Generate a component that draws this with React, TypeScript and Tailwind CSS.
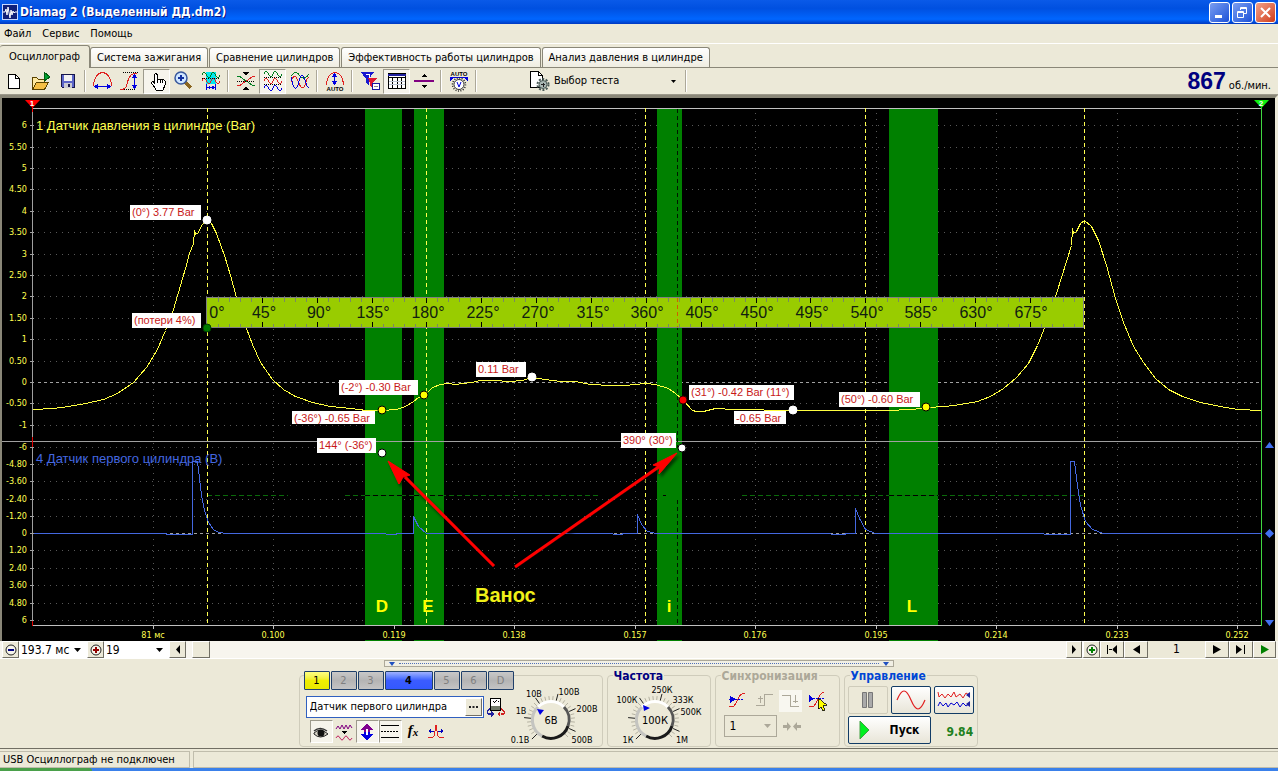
import React from "react";

/* ---------- shared icon canvas ---------- */
function Ico({ children, w = 26, h = 24 }: { children: React.ReactNode; w?: number; h?: number }) {
  return (
    <svg width={w} height={h} viewBox={`0 0 ${w} ${h}`} fill="none" shapeRendering="crispEdges" aria-hidden="true" className="shrink-0">
      {children}
    </svg>
  );
}

const RED = "#e02020";
const BLUE = "#0000e0";

function ToolButton({ label, active, children }: { label: string; active?: boolean; children: React.ReactNode }) {
  return (
    <button
      type="button"
      aria-label={label}
      aria-pressed={active}
      className={
        active
          ? "flex h-[25px] w-[27px] items-center justify-center border border-t-[#9d9a8c] border-l-[#9d9a8c] border-r-white border-b-white bg-[#f6f4ec]"
          : "flex h-[25px] w-[27px] items-center justify-center"
      }
    >
      {children}
    </button>
  );
}

function Sep() {
  return <div className="mx-[3px] h-[22px] w-[2px] border-l border-r border-l-[#aca899] border-r-white" />;
}

const wave = (y: number, a: number) => `M4 ${y}q2.250 ${-a} 4.500 0t4.500 0t4.500 0t4.500 0`;

function Toolbar() {
  return (
    <div className="flex h-[27px] items-center border-b border-[#9d9a8c] bg-[#ece9d8]">
      <ToolButton label="Новый"><Ico><path d="M7.500 5.500h7l4 4v10h-11z" fill="#fff" stroke="#000" /><path d="M14.500 5.500v4h4" stroke="#000" /></Ico></ToolButton>
      <ToolButton label="Открыть">
        <Ico>
          <path d="M4.500 20.500v-12h4l2 2h6v4" fill="#ffe9a0" stroke="#5a4300" />
          <path d="M4.500 20.500l4-7h12l-4 7z" fill="#f5bf45" stroke="#5a4300" />
          <path d="M16 3v9l6-4z" fill="#00a030" stroke="#005a10" />
        </Ico>
      </ToolButton>
      <ToolButton label="Сохранить">
        <Ico>
          <path d="M6.500 5.500h13v13h-12l-1-1z" fill="#5b64c8" stroke="#16164a" />
          <rect x="9" y="6" width="8" height="6" fill="#f2f2f2" />
          <rect x="9" y="14" width="8" height="5" fill="#c9c9d2" />
          <rect x="13" y="15" width="2" height="3" fill="#16164a" />
        </Ico>
      </ToolButton>
      <Sep />
      <ToolButton label="Период">
        <Ico>
          <path d="M3.500 17C4 7 9 3.500 12.500 3.500S21 7 21.500 17" stroke={RED} />
          <path d="M5 17.500h15" stroke={BLUE} strokeWidth="1" />
          <path d="M4 17.500l4-3v6zM21 17.500l-4-3v6z" fill={BLUE} />
        </Ico>
      </ToolButton>
      <ToolButton label="Фронт">
        <Ico>
          <path d="M6 3.500h15M3 20.500h15" stroke="#000" strokeDasharray="1 1" />
          <path d="M3 20.500c8 0 6-5 8-9s2-7 9-7" stroke={RED} />
          <path d="M17.500 6v13" stroke={BLUE} />
          <path d="M17.500 5l-3 4h6zM17.500 20l-3-4h6z" fill={BLUE} />
        </Ico>
      </ToolButton>
      <ToolButton label="Рука" active>
        <Ico>
          <path d="M10.500 14.500V5.500q1-2 2.500 0v5q1.500-1 2.500 0q2-1 3 .5q2-.5 2.500 1v4l-2 5h-7c-1-3-3-4-4.500-7q0-2 2-1z" fill="#fff" stroke="#000" />
          <path d="M13.500 10v4M16 11v3M18.500 12v2" stroke="#000" />
        </Ico>
      </ToolButton>
      <ToolButton label="Лупа">
        <Ico>
          <path d="M14 13l6 6" stroke="#8a6520" strokeWidth="3" />
          <circle cx="10" cy="9" r="6" fill="#cfe6ff" stroke="#38589c" strokeWidth="1.500" shapeRendering="auto" />
          <path d="M7 9h6M10 6v6" stroke="#1030a0" strokeWidth="2" />
        </Ico>
      </ToolButton>
      <ToolButton label="Масштаб участка">
        <Ico>
          <rect x="8" y="3" width="10" height="12" fill="#00e8f0" />
          <path d={wave(6, 5)} stroke="#008020" />
          <path d={wave(12, 5)} stroke={RED} />
          <path d="M4 9.500h18" stroke="#000" strokeDasharray="1 1" />
          <path d="M8.500 15v6M17.500 15v6M9 18.500h8" stroke={BLUE} />
          <path d="M9 18.500l3-2v4zM17 18.500l-3-2v4z" fill={BLUE} />
        </Ico>
      </ToolButton>
      <Sep />
      <ToolButton label="Совместить">
        <Ico>
          <path d="M4 7c5 0 6 4 9 5s5 5 9 5" stroke="#008020" />
          <path d="M4 17c5 0 6-4 9-5s5-5 9-5" stroke={RED} />
          <path d="M4 12.500h18" stroke="#000" strokeDasharray="1 1" />
          <path d="M10 3h6l-3 4zM10 21h6l-3-4z" fill="#000" />
        </Ico>
      </ToolButton>
      <ToolButton label="Разделить" active>
        <Ico>
          <path d={wave(5, 5)} stroke="#008020" />
          <path d={wave(12, 5)} stroke={RED} />
          <path d={wave(19, 5)} stroke={BLUE} />
          <path d="M4 8.500h18M4 15.500h18" stroke="#000" strokeDasharray="1 1" />
        </Ico>
      </ToolButton>
      <ToolButton label="Наложить">
        <Ico>
          <path d="M4 7c4-6 7-3 9 0s6 3 9-2" stroke="#008020" />
          <path d="M4 13c2-7 5-7 7-1s5 10 7 4q2-8 4-7" stroke={RED} />
          <path d="M4 8c1 3 2 12 5 11s3-13 6-13s4 14 7 12" stroke={BLUE} />
        </Ico>
      </ToolButton>
      <Sep />
      <ToolButton label="Авто амплитуда">
        <Ico>
          <path d="M4.500 16C5 7 9 3.500 13 3.500S21 7 21.500 16" stroke={RED} />
          <path d="M12.500 6v9" stroke={BLUE} />
          <path d="M12.500 4l-3 4h6zM12.500 16l-3-4h6z" fill={BLUE} />
          <text x="13" y="22" textAnchor="middle" className="fill-black font-['Liberation_Sans',sans-serif] text-[6px] font-bold">AUTO</text>
        </Ico>
      </ToolButton>
      <Sep />
      <ToolButton label="Фильтр">
        <Ico>
          <path d="M4 3h13l-5 7v6l-3-2v-4z" fill="#1818d0" />
          <path d="M11 9h9l-4 5v5l-3-2v-3z" fill="#e01830" />
          <path d="M9 5h3v4" stroke="#fff" />
          <rect x="15.500" y="14.500" width="7" height="6" fill="#fff" stroke="#1818a0" />
          <path d="M17 17.500h4" stroke="#888" />
        </Ico>
      </ToolButton>
      <ToolButton label="Таблица" active>
        <Ico>
          <rect x="4.500" y="4.500" width="17" height="15" fill="#fff" stroke="#000" />
          <path d="M4 6h18" stroke="#2020a0" strokeWidth="2" />
          <path d="M4 8.500h18M8.500 8v11M13.500 8v11M17.500 8v11" stroke="#000" />
          <path d="M5 12.500h16M5 15.500h16" stroke="#c0c8d8" />
        </Ico>
      </ToolButton>
      <ToolButton label="Линейка">
        <Ico>
          <rect x="3" y="11" width="20" height="2" fill="#800080" />
          <path d="M13 5l-3 3h6zM13 19l-3-3h6z" fill="#000" />
        </Ico>
      </ToolButton>
      <Sep />
      <ToolButton label="Авто напряжение">
        <Ico>
          <text x="13" y="7" textAnchor="middle" className="fill-black font-['Liberation_Sans',sans-serif] text-[6px] font-bold">AUTO</text>
          <path d="M6 9q7-2 14 0" stroke={BLUE} />
          <path d="M4 12v-4l4 1zM22 12v-4l-4 1z" fill={BLUE} />
          <circle cx="13" cy="15.500" r="6.500" stroke="#222" strokeWidth="1.500" strokeDasharray="1 1.500" shapeRendering="auto" />
          <circle cx="13" cy="15.500" r="5" fill="#fff" stroke="#333" shapeRendering="auto" />
          <path d="M11 13l2 5l2-5" stroke={BLUE} shapeRendering="auto" />
        </Ico>
      </ToolButton>
      <Sep />
      <button type="button" className="ml-[46px] flex h-[25px] w-[156px] items-center text-[11px]">
        <Ico w={26}>
          <path d="M4.500 2.500h8l4 4v12h-12z" fill="#fff" stroke="#000" />
          <path d="M12.500 2.500v4h4" stroke="#000" />
          <circle cx="17" cy="15.500" r="5.500" stroke="#4a5a56" strokeWidth="2" strokeDasharray="2 1.500" shapeRendering="auto" />
          <circle cx="17" cy="15.500" r="4" fill="#aab8b4" stroke="#4a5a56" shapeRendering="auto" />
          <path d="M15 15.500h4M17 13.500v4" stroke="#222" />
        </Ico>
        <span className="ml-[2px]">Выбор теста</span>
        <svg width="5" height="3" className="mr-[6px] ml-auto" aria-hidden="true"><path d="M0 0h5l-2.500 3z" fill="#000" /></svg>
      </button>
      <Sep />
      <div className="mr-[7px] ml-auto flex items-baseline gap-[3px]">
        <span className="font-['Liberation_Sans',Arial,sans-serif] text-[23px] leading-[24px] font-bold text-[#000080]">867</span>
        <span className="text-[11px]">об./мин.</span>
      </div>
    </div>
  );
}

/* ---------- oscillogram ---------- */
const barScale: [string, number][] = [
  ["6", 125], ["5.50", 147], ["5", 168], ["4.50", 189], ["4", 211], ["3.50", 232], ["3", 254], ["2.50", 275], ["2", 296],
  ["1.50", 318], ["1", 339], ["0.50", 361], ["0", 382], ["-0.50", 403], ["-1", 425],
];
const voltScale: [string, number][] = [
  ["-6", 447], ["-4.80", 464], ["-3.60", 481], ["-2.40", 499], ["-1.20", 516], ["0", 533], ["1.20", 550], ["2.40", 568],
  ["3.60", 585], ["4.80", 603], ["6", 620],
];
const timeScale: [string, number][] = [
  ["81 мс", 153], ["0.100", 273], ["0.119", 394], ["0.138", 514], ["0.157", 635], ["0.176", 755], ["0.195", 876],
  ["0.214", 996], ["0.233", 1117], ["0.252", 1237],
];
const bands: [string, number, number, number][] = [
  ["D", 365, 37, 382], ["E", 414, 30, 428], ["i", 657, 25, 669], ["L", 889, 49, 912],
];
const strokes = [207, 426, 645, 865, 1084];
const pressure =
  "33,409 53,408 68,406 85,403 103,399 117,393 133,382 146,367 157,349 165,330 173,309 180,285 185,268 189,253 193,243 194,230 195,234 198,232 201,225 205,221 207,220 211,223 216,233 224,255 230,275 236,297 241,312 246,328 252,344 260,362 272,379 283,389 295,396 312,402 330,406 350,408 366,410 382,410 396,409 405,406 413,401 418,397 424,395 432,387 440,384 447,383 455,384 471,382 480,380 493,380 510,381 522,380 531,377 545,379 560,381 575,381 590,384 610,385 625,385 645,383 655,384 668,388 675,393 683,400 692,410 696,411 703,411 715,408 733,409 792,410 830,410 850,410 885,410 912,409 926,407 945,406 960,404 977,401 990,396 1003,388 1016,377 1028,363 1037,345 1047,320 1056,293 1066,261 1071,245 1072,228 1073,233 1076,231 1080,223 1084,220 1091,226 1098,240 1106,265 1115,298 1123,322 1133,346 1143,362 1155,378 1168,389 1182,396 1200,402 1220,406 1237,409 1261,410";
const firstCylinder =
  "33,533 165,533 167,534 192,534 192,461 197,461 199,478 201,495 204,510 208,522 213,529 218,532 227,533 385,533 386,534 396,534 396,533 413,533 413,516 418,526 426,533 612,533 613,534 622,534 622,533 637,533 637,514 641,524 647,531 656,533 830,533 831,534 845,534 845,533 855,533 855,508 859,518 865,529 875,533 1043,533 1044,534 1070,534 1070,461 1074,461 1077,485 1080,505 1085,521 1092,529 1103,533 1261,533";
const notes: [string, number, number, number][] = [
  ["(0°) 3.77 Bar", 130, 205, 71], ["(потери 4%)", 132, 313, 69], ["(-2°) -0.30 Bar", 339, 380, 79],
  ["(-36°) -0.65 Bar", 292, 411, 83], ["144° (-36°)", 317, 438, 59], ["0.11 Bar", 476, 362, 50],
  ["390° (30°)", 621, 433, 55], ["(31°) -0.42 Bar (11°)", 689, 385, 105], ["-0.65 Bar", 734, 411, 52],
  ["(50°) -0.60 Bar", 839, 392, 81],
];
const dots: [number, number, string, string][] = [
  [207, 220, "#fff", "#fff"], [207, 328, "#007a00", "#003c00"], [382, 410, "#ff0", "#000"], [424, 395, "#ff0", "#000"],
  [382, 453, "#fff", "#000"], [532, 377, "#fff", "#fff"], [683, 400, "#f00", "#300"], [793, 410, "#fff", "#fff"],
  [682, 448, "#fff", "#000"], [926, 407, "#ff0", "#000"],
];

function Oscillogram() {
  const gridY = [...barScale, ...voltScale];
  const ticks = Array.from({ length: 80 }, (_, i) => i);
  return (
    <svg viewBox="2 98 1273 543" className="block min-w-0 flex-1 bg-black" role="img" aria-label="Осциллограмма">
      <defs>
        <filter id="soft" x="-20%" y="-20%" width="140%" height="140%"><feDropShadow dx="2" dy="3" stdDeviation="1.500" floodColor="#000" floodOpacity="0.600" /></filter>
      </defs>
      <g shapeRendering="crispEdges" fill="none">
        {gridY.map(([t, y]) => (
          <path key={`${t}${y}`} d={`M38 ${y + 0.5}H1260`} stroke={t === "0" ? "#a0a0a0" : "#585858"} strokeDasharray={t === "0" ? "3 3" : "1 5"} />
        ))}
        {timeScale.map(([t, x]) => <path key={t} d={`M${x + 0.5} 113V625`} stroke="#585858" strokeDasharray="1 5" />)}
        {bands.map(([n, x, w]) => <g key={n} fill="#008000"><rect x={x} y="109" width={w} height="517" /><rect x={x} y="640" width={w} height="1" /></g>)}
        <path d="M2 441.500H1262" stroke="#a0a0a0" />
        <path d="M33 108.500H1262M33 625.500H1262" stroke="#c0c0c0" />
        <path d="M32.500 108V626" stroke="#a0a0a0" />
        <path d="M32.500 437V447M32.500 621V626" stroke="#e00000" />
        {gridY.map(([t, y]) => <path key={`k${t}${y}`} d={`M30 ${y + 0.5}h4`} stroke="#a0a0a0" />)}
        {timeScale.map(([t, x]) => <path key={`k${t}`} d={`M${x + 0.5} 626v3`} stroke="#c0c0c0" />)}
        <path d="M207 495.500H288M345 495.500H600M742 495.500H1084" stroke="#0a6a0a" strokeDasharray="5 3" />
        <path d="M365 495.500H402M414 495.500H444M663 495.500h3M889 495.500H938" stroke="#000" strokeDasharray="5 3" />
        <path d="M677.500 109V448M677.500 500V625" stroke="#001800" strokeDasharray="4 3" />
        {strokes.map((x) => <path key={x} d={`M${x + 0.5} 108V626`} stroke="#ffff50" strokeDasharray="4 3" />)}
        <path d="M1261.500 106V626" stroke="#40d840" />
        <polyline points={firstCylinder} stroke="#4468e0" transform="translate(.5 .5)" />
        <polyline points={pressure} stroke="#ffff40" transform="translate(.5 .5)" />
        <rect x="206.500" y="297.500" width="877" height="30" fill="#99cc00" stroke="#808080" />
        {ticks.map((i) => {
          const x = Math.round(207 + i * 10.97) + 0.5;
          const major = i % 5 === 0;
          return i === 0 ? null : <path key={i} d={`M${x} 298v${major ? 5 : 4}M${x} 327v${major ? -5 : -3}`} stroke={major ? "#000" : "#7a8a60"} />;
        })}
        <path d="M677.500 298V327" stroke="#d06000" strokeDasharray="4 3" />
      </g>
      <g className="font-['Liberation_Sans',Arial,sans-serif] text-[16px]" fill="#102010">
        {Array.from({ length: 16 }, (_, i) => (
          <text key={i} x={i === 0 ? 217 : Math.round(209 + i * 54.8)} y="318" textAnchor="middle">{i * 45}°</text>
        ))}
      </g>
      <g fill="#ffff50" className="font-['DejaVu_Sans_Condensed','DejaVu_Sans',sans-serif] text-[9px]">
        {gridY.map(([t, y]) => <text key={`${t}${y}`} x="27" y={y + 3} textAnchor="end">{t}</text>)}
        {timeScale.map(([t, x]) => <text key={t} x={x} y="638" textAnchor="middle">{t}</text>)}
      </g>
      <g className="font-['Liberation_Sans',Arial,sans-serif] text-[13px]">
        <text x="36" y="130" fill="#ffff50">1 Датчик давления в цилиндре (Bar)</text>
        <text x="36" y="463" fill="#4468e0">4 Датчик первого цилиндра (В)</text>
      </g>
      <g className="font-['Liberation_Sans',Arial,sans-serif] text-[17px] font-bold" fill="#ff0">
        {bands.map(([n, , , x]) => <text key={n} x={x} y="612" textAnchor="middle">{n}</text>)}
      </g>
      <text x="475" y="602" fill="#f0f018" className="font-['Liberation_Sans',Arial,sans-serif] text-[20px] font-bold">Ванос</text>
      {notes.map(([t, x, y, w]) => (
        <g key={t}>
          <rect x={x} y={y} width={w} height={t.startsWith("(-36") || t.startsWith("-0") ? 13 : 15} fill="#fff" />
          <text x={x + 2} y={y + 11} fill="#c81818" className="font-['Liberation_Sans',Arial,sans-serif] text-[11px]">{t}</text>
        </g>
      ))}
      {dots.map(([x, y, f, s]) => <circle key={`${x}${y}`} cx={x} cy={y} r="4" fill={f} stroke={s} />)}
      <g filter="url(#soft)" fill="#f00">
        <path d="M494 566L405 477" stroke="#f00" strokeWidth="3" />
        <path d="M388 461l11 23l4-7l7-2z" stroke="#f00" />
        <path d="M515 567L660 466" stroke="#f00" strokeWidth="3" />
        <path d="M677 453l-24 12l7 2l-1 7z" stroke="#f00" />
      </g>
      <path d="M25 100h15l-7.500 8z" fill="#f00" />
      <path d="M32.500 106v6" stroke="#f00" />
      <path d="M1254 100h15l-7.500 8z" fill="#10f010" />
      <g fill="#fff" textAnchor="middle" className="font-['Liberation_Sans',Arial,sans-serif] text-[8px] font-bold">
        <text x="32" y="106">1</text>
        <text x="1261" y="106">2</text>
      </g>
      <path d="M1265 448h9l-4.500-6zM1265 620h9l-4.500 6zM1265 533.500l4.500-4.500l4.500 4.500l-4.500 4.500z" fill="#4070f0" />
    </svg>
  );
}

/* ---------- scroll row ---------- */
const raised = "flex h-[17px] items-center justify-center border border-t-white border-l-white border-r-[#716f64] border-b-[#716f64] bg-[#ece9d8] ";

function Zoomer({ plus, color }: { plus?: boolean; color: string }) {
  return (
    <svg width="12" height="12" viewBox="0 0 12 12" fill="none" aria-hidden="true">
      <circle cx="6" cy="6" r="5" fill="#f6f4ea" stroke="#222" />
      <path d={plus ? "M3 6h6M6 3v6" : "M3 6h6"} stroke={color} strokeWidth="2" />
    </svg>
  );
}

function PlainSelect({ label, value, width }: { label: string; value: string; width: string }) {
  return (
    <label className={`relative flex h-[17px] items-center bg-white ${width}`}>
      <select aria-label={label} className="h-[17px] w-full appearance-none bg-white pl-[2px] text-[12px] leading-[16px] outline-none">
        <option>{value}</option>
      </select>
      <svg width="7" height="4" className="pointer-events-none absolute right-[6px]" aria-hidden="true"><path d="M0 0h7l-3.500 4z" fill="#000" /></svg>
    </label>
  );
}

function Glyph({ d, fill = "#000" }: { d: string; fill?: string }) {
  return <svg width="12" height="9" viewBox="0 0 12 9" aria-hidden="true"><path d={d} fill={fill} /></svg>;
}

function ScrollRow() {
  return (
    <div className="flex h-[18px] items-start border-b border-white bg-[#f7f5ee] pr-[2px] pl-[2px]">
      <button type="button" aria-label="Уменьшить" className={raised + "w-[17px]"}><Zoomer color="#000080" /></button>
      <PlainSelect label="Длительность" value="193.7 мс" width="w-[68px]" />
      <button type="button" aria-label="Увеличить" className={raised + "w-[17px]"}><Zoomer plus color="#900000" /></button>
      <PlainSelect label="Деление" value="19" width="w-[65px]" />
      <button type="button" aria-label="Влево" className={raised + "w-[17px]"}><Glyph d="M8 0v9l-4-4.500z" /></button>
      <div className="ml-[6px] h-[17px] w-[18px] border border-t-white border-l-white border-r-[#716f64] border-b-[#716f64] bg-[#ece9d8]" />
      <div className="flex-1" />
      <button type="button" aria-label="Вправо" className={raised + "w-[16px]"}><Glyph d="M4 0v9l4-4.500z" /></button>
      <button type="button" aria-label="Добавить" className={raised + "w-[18px] border-l-2 border-l-[#4070d0]"}><Zoomer plus color="#008000" /></button>
      <button type="button" aria-label="В начало" className={raised + "w-[24px]"}><Glyph d="M1 0h1v9h-1zM11 0v9l-5-4.500zM7 4h-4v1h4z" /></button>
      <button type="button" aria-label="Предыдущий" className={raised + "w-[24px]"}><Glyph d="M10 0v9l-7-4.500z" /></button>
      <span className="h-[17px] w-[57px] bg-[#ece9d8] text-center text-[12px] leading-[17px]">1</span>
      <button type="button" aria-label="Следующий" className={raised + "w-[24px]"}><Glyph d="M2 0v9l8-4.500z" /></button>
      <button type="button" aria-label="В конец" className={raised + "w-[24px]"}><Glyph d="M1 0v9l6-4.500zM9 0h1v9h-1z" /></button>
      <button type="button" aria-label="Воспроизвести" className={raised + "w-[23px]"}><Glyph d="M2 0v9l8-4.500z" fill="#008000" /></button>
    </div>
  );
}

/* ---------- bottom control panel ---------- */
function Panel({ title, tone, className, children }: { title?: string; tone?: string; className: string; children: React.ReactNode }) {
  return (
    <section className={`relative h-[72px] rounded-[4px] border border-[#cfccbb] ${className}`}>
      {title && <h2 className={`absolute -top-[6px] left-[5px] bg-[#ece9d8] px-[1px] text-[12px] leading-[13px] font-bold ${tone}`}>{title}</h2>}
      {children}
    </section>
  );
}

type Mark = [string, number, number];

function Dial({ label, value, marks, pointer }: { label: string; value: string; marks: Mark[]; pointer: string }) {
  const steps = Array.from({ length: 28 }, (_, i) => i);
  return (
    <label className="relative block h-[70px] w-[100px]">
      <svg width="100" height="70" viewBox="0 0 100 70" fill="none" aria-hidden="true">
        {steps.map((i) => {
          const a = ((135 + i * 10) * Math.PI) / 180;
          const major = i % 5 === 0;
          const r = major ? 27 : 24;
          return (
            <path
              key={i}
              d={`M${(50 + 20 * Math.cos(a)).toFixed(1)} ${(44 + 20 * Math.sin(a)).toFixed(1)}L${(50 + r * Math.cos(a)).toFixed(1)} ${(44 + r * Math.sin(a)).toFixed(1)}`}
              stroke={major ? "#222" : "#b5b2a2"}
            />
          );
        })}
        <path d="M37 31A18 18 0 0 1 63 31" stroke="#fff" strokeWidth="3" />
        <path d="M63 31A18 18 0 0 1 67 50" stroke="#555" strokeWidth="3" />
        <path d="M67 50A18 18 0 0 1 41 60" stroke="#1a1a1a" strokeWidth="3" />
        <path d="M41 60A18 18 0 0 1 37 31" stroke="#c4c4c0" strokeWidth="3" />
        <path d={pointer} fill="#0000e0" />
        <g fill="#000" textAnchor="middle" className="font-['DejaVu_Sans_Condensed','DejaVu_Sans',sans-serif]">
          <text x="50" y="48" className="text-[11px]">{value}</text>
          {marks.map(([t, x, y]) => <text key={t} x={x} y={y} className="text-[9px]">{t}</text>)}
        </g>
      </svg>
      <input type="range" min={0} max={5} defaultValue={2} aria-label={label} className="absolute inset-0 h-full w-full cursor-pointer opacity-0" />
    </label>
  );
}

const plain = "w-[26px] bg-gradient-to-b from-[#c8c8c8] via-[#b4b4b4] to-[#c4c4c4] font-normal text-[#808080]";
const channels: [string, string][] = [
  ["1", "w-[26px] bg-gradient-to-b from-[#ffff80] via-[#f0ee00] to-[#e8e800]"],
  ["2", plain], ["3", plain],
  ["4", "w-[48px] bg-gradient-to-b from-[#a0b0ff] via-[#3b5cff] to-[#3358ff] font-bold"],
  ["5", plain], ["6", plain], ["D", plain],
];

const toggle = "flex h-[23px] w-[23px] items-center justify-center ";
const sunk = "border border-t-[#9d9a8c] border-l-[#9d9a8c] border-r-white border-b-white bg-[#f6f4ec]";
const boxed = "flex items-center justify-center rounded-[2px] border border-[#123c66] bg-gradient-to-b from-white to-[#e8e5d8] ";

function Controls() {
  return (
    <div className="flex flex-col items-center bg-[#ece9d8]">
      <div className="mt-[1px] flex h-[7px] w-[510px] items-center justify-between border border-[#aca899] bg-[#f1efe4] px-1">
        <svg width="6" height="4" aria-hidden="true"><path d="M0 0h6l-3 4z" fill="#2050c0" /></svg>
        <div className="mx-1 h-px flex-1 border-t border-dotted border-[#5070b8]" />
        <svg width="6" height="4" aria-hidden="true"><path d="M0 0h6l-3 4z" fill="#2050c0" /></svg>
      </div>
      <div className="mt-2 mb-[1px] flex gap-1 pr-[2px]">
        <Panel className="flex w-[304px]">
          <div className="w-[214px] pl-[4px]">
            <div className="-mt-[5px] flex gap-[1px] bg-[#ece9d8]">
              {channels.map(([n, c]) => (
                <button key={n} type="button" className={`h-[19px] rounded-[1px] border border-[#20406a] text-[11px] leading-[17px] ${c}`}>{n}</button>
              ))}
            </div>
            <div className="mt-[6px] ml-[2px] flex items-center">
              <div className="flex h-[22px] w-[178px] items-center border border-[#3060c0] bg-white pr-px">
                <input aria-label="Датчик" defaultValue="Датчик первого цилиндра" className="min-w-0 flex-1 bg-white pl-[3px] text-[11px] outline-none" />
                <button type="button" aria-label="Выбрать датчик" className="flex h-[18px] w-[17px] items-center justify-center gap-[2px] border border-t-white border-l-white border-r-[#716f64] border-b-[#716f64] bg-[#ece9d8]">
                  <svg width="9" height="2" aria-hidden="true"><path d="M0 0h2v2h-2zM3.500 0h2v2h-2zM7 0h2v2h-2z" fill="#222" /></svg>
                </button>
              </div>
              <button type="button" aria-label="Перевернуть" className="ml-[2px]">
                <Ico w={20} h={20}>
                  <rect x="4.500" y="1.500" width="10" height="12" fill="#fff" stroke="#000" />
                  <rect x="5" y="9" width="9" height="4" fill="#707868" />
                  <path d="M8 6l3-3M7 4h1M12 4h1" stroke="#000" />
                  <path d="M4 12c-4 2-3 6 1 5" stroke="#2020a0" strokeWidth="1.500" />
                  <path d="M5 14v6l3-3z" fill="#2020a0" />
                  <path d="M15 12c5 2 4 6 0 5" stroke="#d02020" strokeWidth="1.500" />
                  <path d="M14 14v6l-3-3z" fill="#d02020" />
                </Ico>
              </button>
            </div>
            <div className="mt-[2px] ml-[6px] flex">
              <button type="button" aria-label="Видимость" aria-pressed="true" className={toggle + sunk}>
                <Ico w={18} h={18}>
                  <path d="M2 10q6-6 14 1q-8 6-14 0z" fill="#d8d4c8" stroke="#222" shapeRendering="auto" />
                  <circle cx="9" cy="10" r="3.500" fill="#111" shapeRendering="auto" />
                  <path d="M2 8q6-5 13 0" stroke="#333" strokeWidth="1.500" shapeRendering="auto" />
                </Ico>
              </button>
              <button type="button" aria-label="Сглаживание" className={toggle}>
                <Ico w={18} h={18}>
                  <path d="M1 6l2-3l2 3l2-4l2 4l2-4l2 4l2-4l2 3" stroke="#800080" shapeRendering="auto" />
                  <path d="M6 8h6l-3 3z" fill="#000" />
                  <path d="M1 15q2-4 4 0t4 0t4 0t4 0" stroke="#c02060" shapeRendering="auto" />
                </Ico>
              </button>
              <button type="button" aria-label="Сдвиг" aria-pressed="true" className={toggle + sunk}>
                <Ico w={18} h={18}>
                  <path d="M9 1l7 6h-4v2H6V7H2z" fill="#800090" />
                  <path d="M9 17l7-6h-4V9H6v2H2z" fill="#0000e0" />
                  <path d="M9 6v6" stroke="#fff" strokeWidth="2" />
                </Ico>
              </button>
              <button type="button" aria-label="Уровни" aria-pressed="true" className={toggle + sunk}>
                <Ico w={18} h={18}><path d="M0 2.500h18M0 14.500h18" stroke="#000" /><path d="M0 8.500h18" stroke="#000" strokeDasharray="2 1" /></Ico>
              </button>
              <button type="button" aria-label="Функция" className={toggle + "pb-1 font-['Liberation_Serif',serif] text-[15px] font-bold italic"}>f<span className="pt-1 text-[11px]">x</span></button>
              <button type="button" aria-label="Фильтр помех" className={toggle}>
                <Ico w={18} h={18}>
                  <path d="M1 14h5q2 0 2-6l1-6l1 6q0 6 2 6h5" stroke={RED} />
                  <path d="M4 6l-3 2l3 2zM14 6l3 2l-3 2z" fill="#0000c0" />
                  <path d="M2 8h5M11 8h5" stroke="#0000c0" />
                </Ico>
              </button>
            </div>
          </div>
          <div className="-ml-[13px]">
            <Dial
              label="Напряжение"
              value="6В"
              pointer="M36 33l7 1l-4 5z"
              marks={[["0.1В", 19, 67], ["1В", 20, 38], ["10В", 33, 21], ["100В", 68, 19], ["200В", 86, 36], ["500В", 81, 67]]}
            />
          </div>
        </Panel>
        <Panel title="Частота" tone="text-[#000080]" className="w-[104px]">
          <div className="-ml-[3px]">
            <Dial
              label="Частота"
              value="100К"
              pointer="M38 29l7 3l-6 3z"
              marks={[["1К", 23, 67], ["100К", 22, 27], ["250К", 57, 17], ["333К", 78, 27], ["500К", 86, 39], ["1М", 77, 67]]}
            />
          </div>
        </Panel>
        <Panel title="Синхронизация" tone="text-[#aca899]" className="w-[125px]">
          <div className="mt-[14px] ml-[9px] flex gap-[4px]">
            <button type="button" aria-label="Уровень" className="h-[22px] w-[23px]">
              <Ico w={23} h={22}><path d="M4 16q5 3 8-5t8-8" stroke={RED} /><path d="M4 9.500h15" stroke={BLUE} strokeDasharray="2 1" /><path d="M5 6v7l6-4z" fill={BLUE} /></Ico>
            </button>
            <button type="button" aria-label="Передний фронт" disabled className="h-[22px] w-[23px]">
              <Ico w={23} h={22}><path d="M4 15.500h8v-11h9M8.500 13v-7M6 8.500h5" stroke="#aca899" /></Ico>
            </button>
            <button type="button" aria-label="Задний фронт" disabled className="h-[22px] w-[23px] bg-[#f8f7f0]">
              <Ico w={23} h={22}><path d="M3 5.500h8v11h9M16.500 5v8M14 11.500h5" stroke="#aca899" /></Ico>
            </button>
            <button type="button" aria-label="Установить уровень" className="h-[22px] w-[23px]">
              <Ico w={23} h={22}>
                <path d="M3 16q5 3 8-5t7-9" stroke={RED} />
                <path d="M4 8.500h14" stroke={BLUE} strokeDasharray="2 1" />
                <path d="M3 5v7l5-3z" fill={BLUE} />
                <path d="M12 8v11l3-2l2 4l2-1l-2-4l4-1z" fill="#ff0" stroke="#000" strokeWidth="0.800" />
              </Ico>
            </button>
          </div>
          <div className="mt-[3px] ml-[8px] flex items-center gap-[6px]">
            <label className="relative flex items-center">
              <select aria-label="Канал синхронизации" className="h-[22px] w-[53px] appearance-none border border-[#aca899] bg-[#ece9d8] pl-[5px] text-[12px] outline-none"><option>1</option></select>
              <svg width="7" height="4" className="pointer-events-none absolute right-[6px]" aria-hidden="true"><path d="M0 0h7l-3.500 4z" fill="#aca899" /></svg>
            </label>
            <svg width="18" height="9" viewBox="0 0 18 9" aria-hidden="true"><path d="M0 3h4V0l4 4.500L4 9V6H0zM18 3h-4V0l-4 4.500L14 9V6h4z" fill="#aca899" /></svg>
          </div>
        </Panel>
        <Panel title="Управление" tone="text-[#0046d5]" className="w-[134px]">
          <div className="mt-[10px] ml-[3px] flex gap-[3px]">
            <button type="button" aria-label="Пауза" disabled className="flex h-[28px] w-[40px] items-center justify-center rounded-[2px] border border-[#cfccbb]">
              <svg width="12" height="16" aria-hidden="true"><path d="M.500.500h4v15h-4zM6.500.500h4v15h-4z" fill="#aaa" stroke="#777" /></svg>
            </button>
            <button type="button" aria-label="Однократно" className={boxed + "h-[28px] w-[40px]"}>
              <svg width="30" height="20" viewBox="0 0 30 20" fill="none" aria-hidden="true"><path d="M1 10C6-2 10-2 15 10S24 22 29 10" stroke="#e02020" strokeWidth="1.200" /></svg>
            </button>
            <button type="button" aria-label="Непрерывно" className={boxed + "h-[28px] w-[40px]"}>
              <svg width="34" height="20" viewBox="0 0 34 20" fill="none" aria-hidden="true">
                <path d="M1 2l1 5l3-3l3 4l3-4l3 3l3-5l2 5l4-3l3 4l3-5l3 2" stroke="#e02020" />
                <path d="M1 16l2-4l3 4l3-3l2 4l3-4l3 2l3-3l3 5l3-4l3 3l3-2" stroke="#0000d0" />
                <path d="M33 2v6l-4-3zM33 11v6l-4-3z" fill="#2020a0" />
              </svg>
            </button>
          </div>
          <div className="mt-[2px] ml-[3px] flex items-center">
            <button type="button" className={boxed + "h-[28px] w-[83px] gap-5 text-[12px] font-bold"}>
              <svg width="11" height="19" aria-hidden="true"><path d="M1 0v18l9-9z" fill="#00f020" stroke="#40a040" /></svg>
              Пуск
            </button>
            <span className="mt-[4px] ml-[16px] text-[12px] font-bold text-[#208020]">9.84</span>
          </div>
        </Panel>
      </div>
    </div>
  );
}

/* ---------- window ---------- */
const caption = "flex h-[21px] w-[21px] items-center justify-center rounded-[3px] border border-white ";
const tabs = ["Система зажигания", "Сравнение цилиндров", "Эффективность работы цилиндров", "Анализ давления в цилиндре"];

export default function App() {
  return (
    <div className="flex min-h-screen flex-col bg-[#ece9d8] font-['DejaVu_Sans_Condensed','DejaVu_Sans',Tahoma,sans-serif] text-[11px] leading-[14px] text-black">
      <header className="flex h-[24px] items-center bg-[linear-gradient(#0a5ae8,#0050e0_35%,#0066ff_80%,#0038c0)] px-[2px]">
        <svg width="16" height="16" viewBox="0 0 16 16" fill="none" aria-hidden="true">
          <rect x=".500" y=".500" width="15" height="15" fill="#10207a" stroke="#c8d8ff" />
          <path d="M1 8h2l1-3l1 6l1-8l2 11l1-8l1 5l1-4l1 2l1-1h2" stroke="#fff" />
        </svg>
        <h1 className="ml-[2px] text-[12px] font-bold text-white [text-shadow:1px_1px_#0a1883]">Diamag 2 (Выделенный ДД.dm2)</h1>
        <div className="ml-auto flex gap-[2px]">
          <button type="button" aria-label="Свернуть" className={caption + "bg-gradient-to-br from-[#7a9cf0] to-[#1c50d8]"}><svg width="13" height="13" aria-hidden="true"><path d="M2 9h7v3h-7z" fill="#fff" /></svg></button>
          <button type="button" aria-label="Восстановить" className={caption + "bg-gradient-to-br from-[#7a9cf0] to-[#1c50d8]"}>
            <svg width="13" height="13" fill="none" stroke="#fff" aria-hidden="true"><path d="M1.500 5.500h6v6h-6zM1 6.500h7M4.500 4V1.500h6v6H8M4 2.500h7" /></svg>
          </button>
          <button type="button" aria-label="Закрыть" className={caption + "bg-gradient-to-br from-[#f0a088] to-[#d03810]"}><svg width="13" height="13" aria-hidden="true"><path d="M2 2l9 9M11 2l-9 9" stroke="#fff" strokeWidth="2" /></svg></button>
        </div>
      </header>
      <nav aria-label="Меню" className="flex h-[20px] items-center gap-[11px] border-b border-white pl-[4px]">
        <a href="#file">Файл</a>
        <a href="#service">Сервис</a>
        <a href="#help">Помощь</a>
      </nav>
      <div role="tablist" className="flex h-[24px] items-end border-b border-[#8a8778]">
        <button type="button" role="tab" aria-selected="true" className="-mb-px h-[23px] w-[90px] rounded-t-[3px] border border-b-0 border-l-0 border-[#8a8778] bg-[#ece9d8] pb-[1px]">Осциллограф</button>
        {tabs.map((t) => (
          <button key={t} type="button" role="tab" aria-selected="false" className="mr-[1px] h-[20px] rounded-t-[3px] border border-b-0 border-[#8a8778] bg-gradient-to-b from-white to-[#efede1] px-[6px]">{t}</button>
        ))}
      </div>
      <Toolbar />
      <main>
        <div className="flex border-t-[3px] border-r-[3px] border-l-2 border-t-[#8a8778] border-r-[#ece9d8] border-l-[#8a8778]">
          <Oscillogram />
        </div>
        <ScrollRow />
        <Controls />
      </main>
      <footer className="mt-auto">
        <div className="flex h-[20px] gap-[3px] border-t border-[#716f64] pt-[2px]">
          <div className="w-[190px] border border-l-0 border-[#c0bdac] pl-[3px] leading-[15px]">USB Осциллограф не подключен</div>
          <div className="flex-1 border border-r-0 border-[#c0bdac]" />
        </div>
        <div className="flex h-[3px] bg-[#3a80ea]"><div className="h-full w-[92px] rounded-tr-[3px] bg-[#4aa04a]" /></div>
      </footer>
    </div>
  );
}
